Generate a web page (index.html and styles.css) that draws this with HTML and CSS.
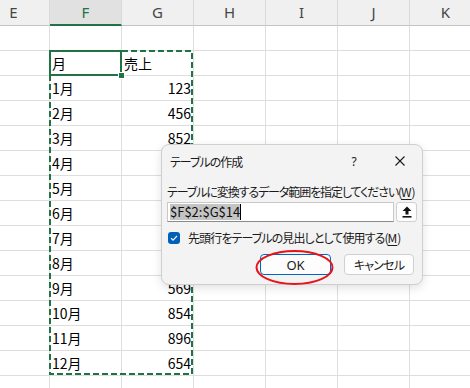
FILE: index.html
```html
<!DOCTYPE html>
<html lang="ja">
<head>
<meta charset="utf-8">
<link rel="stylesheet" href="styles.css">
</head>
<body>
<div class="screen">
  <div class="sheet">
    <div class="hd">E</div><div class="hd sel">F</div><div class="hd">G</div><div class="hd">H</div><div class="hd">I</div><div class="hd">J</div><div class="hd">K</div>

    <div class="c"></div><div class="c"></div><div class="c"></div><div class="c"></div><div class="c"></div><div class="c"></div><div class="c"></div>
    <div class="c"></div><div class="c">月</div><div class="c">売上</div><div class="c"></div><div class="c"></div><div class="c"></div><div class="c"></div>
    <div class="c"></div><div class="c">1月</div><div class="c n">123</div><div class="c"></div><div class="c"></div><div class="c"></div><div class="c"></div>
    <div class="c"></div><div class="c">2月</div><div class="c n">456</div><div class="c"></div><div class="c"></div><div class="c"></div><div class="c"></div>
    <div class="c"></div><div class="c">3月</div><div class="c n">852</div><div class="c"></div><div class="c"></div><div class="c"></div><div class="c"></div>
    <div class="c"></div><div class="c">4月</div><div class="c n"></div><div class="c"></div><div class="c"></div><div class="c"></div><div class="c"></div>
    <div class="c"></div><div class="c">5月</div><div class="c n"></div><div class="c"></div><div class="c"></div><div class="c"></div><div class="c"></div>
    <div class="c"></div><div class="c">6月</div><div class="c n"></div><div class="c"></div><div class="c"></div><div class="c"></div><div class="c"></div>
    <div class="c"></div><div class="c">7月</div><div class="c n"></div><div class="c"></div><div class="c"></div><div class="c"></div><div class="c"></div>
    <div class="c"></div><div class="c">8月</div><div class="c n"></div><div class="c"></div><div class="c"></div><div class="c"></div><div class="c"></div>
    <div class="c"></div><div class="c">9月</div><div class="c n">569</div><div class="c"></div><div class="c"></div><div class="c"></div><div class="c"></div>
    <div class="c"></div><div class="c">10月</div><div class="c n">854</div><div class="c"></div><div class="c"></div><div class="c"></div><div class="c"></div>
    <div class="c"></div><div class="c">11月</div><div class="c n">896</div><div class="c"></div><div class="c"></div><div class="c"></div><div class="c"></div>
    <div class="c"></div><div class="c">12月</div><div class="c n">654</div><div class="c"></div><div class="c"></div><div class="c"></div><div class="c"></div>
    <div class="c"></div><div class="c"></div><div class="c"></div><div class="c"></div><div class="c"></div><div class="c"></div><div class="c"></div>
  </div>

  <svg class="overlay" width="470" height="388" viewBox="0 0 470 388">
    <rect x="50" y="51" width="142" height="323" fill="none" stroke="#217346" stroke-width="2" stroke-dasharray="6 3"/>
    <rect x="50" y="51" width="71" height="24" fill="none" stroke="#217346" stroke-width="2"/>
    <rect x="118.5" y="72.5" width="6" height="6" fill="#217346" stroke="#fff" stroke-width="1"/>
  </svg>

  <div class="dialog">
    <div class="title-bar">
      <span class="title">テーブルの作成</span>
      <span class="help">?</span>
      <span class="close">
        <svg width="10" height="10" viewBox="0 0 10 10"><path d="M0.5 0.5 L9.5 9.5 M9.5 0.5 L0.5 9.5" stroke="#1a1a1a" stroke-width="1.1"/></svg>
      </span>
    </div>
    <div class="body">
      <div class="label">テーブルに変換するデータ範囲を指定してください(<u>W</u>)</div>
      <div class="input-row">
        <div class="input"><span class="selected">$F$2:$G$14</span><span class="caret"></span></div>
        <div class="pick">
          <svg width="10" height="12" viewBox="0 0 10 12"><path d="M5 0.5 L9.5 5 H6.5 V8.5 H3.5 V5 H0.5 Z" fill="#111"/><rect x="0.5" y="10" width="9" height="1.6" fill="#111"/></svg>
        </div>
      </div>
      <div class="check-row">
        <span class="check">
          <svg width="12" height="12" viewBox="0 0 12 12"><path d="M3 6.2 L5 8.2 L9 4" fill="none" stroke="#fff" stroke-width="1.1"/></svg>
        </span>
        <span class="check-label">先頭行をテーブルの見出しとして使用する(<u>M</u>)</span>
      </div>
      <div class="buttons">
        <span class="btn primary">OK</span>
        <span class="btn">キャンセル</span>
      </div>
    </div>
  </div>

  <svg class="overlay" width="470" height="388" viewBox="0 0 470 388">
    <ellipse cx="294.5" cy="267.5" rx="38" ry="16.5" fill="none" stroke="#e8141b" stroke-width="2"/>
  </svg>
</div>
</body>
</html>
```

FILE: styles.css
```css
html, body {
  margin: 0;
  padding: 0;
  background: #ffffff;
}

.screen {
  position: relative;
  width: 470px;
  height: 388px;
  overflow: hidden;
  background: #ffffff;
}

.sheet {
  display: grid;
  grid-template-columns: repeat(7, 72px);
  grid-template-rows: 26px;
  grid-auto-rows: 25px;
  margin-left: -22px;
  font-family: "Noto Sans CJK JP", "Noto Sans", sans-serif;
  font-size: 14px;
  color: #000;
}

.hd {
  box-sizing: border-box;
  background: #f0f0f0;
  border-right: 1px solid #d9d9d9;
  border-bottom: 1px solid #c4c4c4;
  display: flex;
  align-items: center;
  justify-content: center;
  font-family: "Noto Sans", sans-serif;
  font-size: 15px;
  color: #454545;
  padding-bottom: 1px;
}

.hd.sel {
  background: #e1e1e1;
  color: #217346;
  border-bottom: 2px solid #217346;
  padding-bottom: 0;
}

.c {
  box-sizing: border-box;
  border-right: 1px solid #dedede;
  border-bottom: 1px solid #dedede;
  display: flex;
  align-items: center;
  padding: 0 2px 1px 2px;
  white-space: nowrap;
  line-height: 1;
}

.c.n {
  justify-content: flex-end;
  padding-right: 2px;
}

.overlay {
  position: absolute;
  left: 0;
  top: 0;
  pointer-events: none;
}

.dialog {
  position: absolute;
  left: 161px;
  top: 144px;
  width: 262px;
  height: 141px;
  box-sizing: border-box;
  background: #f3f3f3;
  border: 1px solid #cfcfcf;
  border-radius: 8px;
  box-shadow: 0 3px 10px rgba(0, 0, 0, 0.12);
  font-family: "Noto Sans CJK JP", sans-serif;
  font-size: 12px;
  font-feature-settings: "palt";
  color: #1a1a1a;
  display: flex;
  flex-direction: column;
}

.title-bar {
  height: 32px;
  display: flex;
  align-items: center;
  padding-left: 8px;
}

.title {
  flex: 1;
  letter-spacing: -1px;
}

.help {
  width: 12px;
  text-align: center;
  font-family: "Noto Sans", sans-serif;
  font-size: 12px;
  margin-right: 35px;
}

.close {
  display: flex;
  margin-right: 17px;
}

.body {
  padding: 0 5px;
  display: flex;
  flex-direction: column;
}

.label {
  margin-top: 7px;
  line-height: 16px;
  white-space: nowrap;
  letter-spacing: -1.1px;
}

.label u, .check-label u {
  text-underline-offset: 2px;
  letter-spacing: 0;
}

.input-row {
  margin-top: 2px;
  display: flex;
  gap: 2px;
  height: 20px;
}

.input {
  flex: 1;
  box-sizing: border-box;
  background: #ffffff;
  border: 1px solid #c8c8c8;
  border-bottom-color: #8a8a8a;
  display: flex;
  align-items: center;
  padding-left: 2px;
  font-size: 13px;
  font-feature-settings: normal;
}

.selected {
  background: #c4c4c4;
  line-height: 16px;
  color: #111;
}

.caret {
  width: 1px;
  height: 16px;
  background: #000;
}

.pick {
  width: 21px;
  box-sizing: border-box;
  background: #fdfdfd;
  border: 1px solid #d0d0d0;
  border-radius: 3px;
  display: flex;
  align-items: center;
  justify-content: center;
}

.check-row {
  margin-top: 9px;
  display: flex;
  align-items: center;
  gap: 8px;
  padding-left: 1px;
  height: 13px;
}

.check {
  width: 12px;
  height: 12px;
  background: #005fb8;
  border-radius: 3px;
  display: flex;
}

.check-label {
  white-space: nowrap;
  line-height: 13px;
  letter-spacing: -0.9px;
}

.buttons {
  margin-top: 10px;
  display: flex;
  justify-content: flex-end;
  gap: 13px;
  padding-right: 3px;
}

.btn {
  box-sizing: border-box;
  width: 70px;
  height: 21px;
  background: #fdfdfd;
  border: 1px solid #d0d0d0;
  border-radius: 4px;
  display: flex;
  align-items: center;
  justify-content: center;
  letter-spacing: -0.8px;
}

.btn.primary {
  width: 71px;
  border-color: #0067c0;
  font-family: "Noto Sans", sans-serif;
  font-size: 13px;
  letter-spacing: 0;
}
```
